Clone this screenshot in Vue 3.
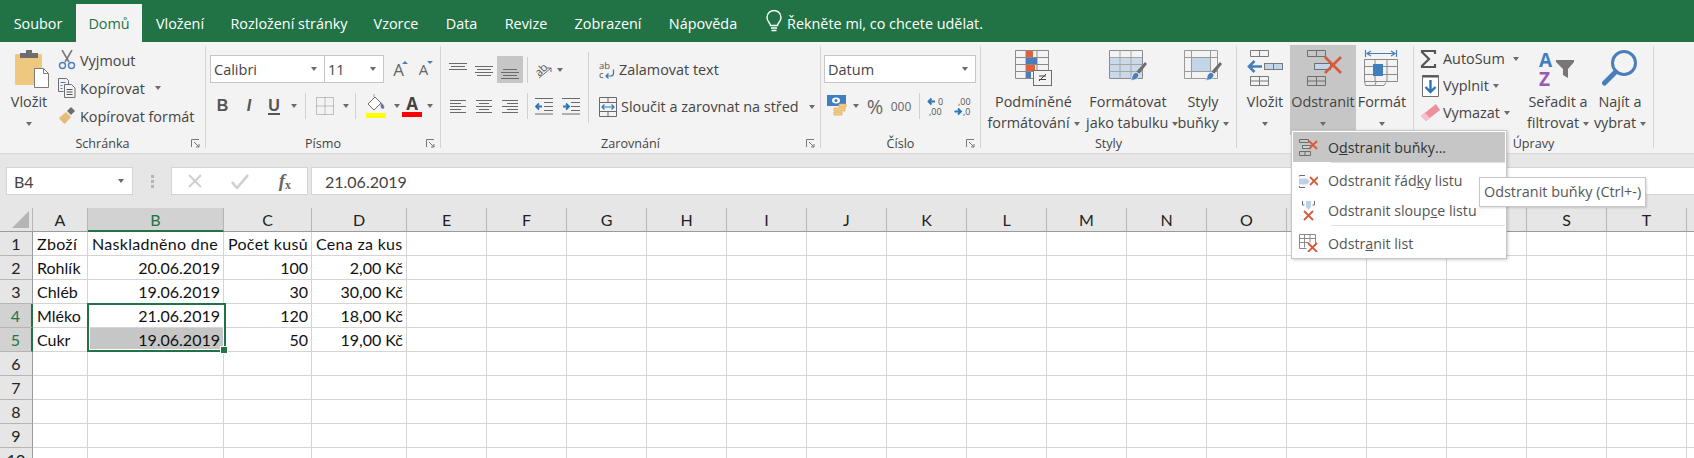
<template>
  <div class="app">
    <!-- tabs -->
    <div class="tabs">
      <span v-for="t in tabs" :key="t.name" class="tab" :class="{ active: t.name === 'Domů' }" :style="{ width: t.w + 'px' }">{{ t.name }}</span>
      <svg class="bulb" width="18" height="24" viewBox="0 0 18 24" fill="none" stroke="#fff" stroke-width="1.4">
        <path d="M5.5 15.5c0-2.5-3.5-4-3.5-8a7 7 0 0 1 14 0c0 4-3.500 5.500-3.500 8z" />
        <path d="M6 18h6M6.500 20.500h5" />
      </svg>
      <span class="tell">Řekněte mi, co chcete udělat.</span>
    </div>

    <!-- ribbon -->
    <div class="ribbon">
      <!-- Schránka -->
      <section class="group g-clip">
        <div class="body clip-body">
          <div class="big paste">
            <div class="big-icon">
              <svg class="paste-icon" width="34" height="38" viewBox="0 0 34 38">
                <rect x="0" y="4" width="27" height="31" rx="1" fill="#edc87e" />
                <path d="M5 8V3h6V0h6v3h6v5z" fill="#6d6d6d" />
                <path d="M19.500 18.500h9l5 5v14h-14z" fill="#fff" stroke="#7a7a7a" />
                <path d="M28.500 18.500v5h5" fill="none" stroke="#7a7a7a" />
              </svg>
            </div>
            <div class="big-text">Vložit</div>
            <div class="big-text"><i class="caret"></i></div>
          </div>
          <div class="small-col">
            <div class="small">
              <svg width="18" height="20" viewBox="0 0 18 20" fill="none">
                <path d="M4 0l7 12M14 0L7 12" stroke="#7a7a7a" stroke-width="1.600" />
                <circle cx="4.500" cy="15.500" r="3" stroke="#4a7ebb" stroke-width="1.400" />
                <circle cx="13.500" cy="15.500" r="3" stroke="#4a7ebb" stroke-width="1.400" />
              </svg>
              <span>Vyjmout</span>
            </div>
            <div class="small">
              <svg width="18" height="20" viewBox="0 0 18 20" fill="none" stroke="#6e6e6e">
                <path d="M.5.5h8l2 2v4M.5.5v13h5" />
                <path d="M6.500 6.500h7l3.500 3.500v9.500H6.500z" fill="#f3f3f3" />
                <path d="M2.500 4.500h5M2.500 7.500h2M2.500 10.500h2" stroke="#4a7ebb" />
                <path d="M8.500 11.500h6M8.500 14h6M8.500 16.500h6" stroke="#555" />
              </svg>
              <span>Kopírovat</span><i class="caret after-copy"></i>
            </div>
            <div class="small">
              <svg width="18" height="20" viewBox="0 0 18 20">
                <path d="M1 12l7-6 5 5-6 7c-2-1-3-2-3-3-1 0-2-1-3-3z" fill="#e4bd7c" />
                <path d="M9 5l4-4 4 4-4 4z" fill="#6e6e6e" />
              </svg>
              <span>Kopírovat formát</span>
            </div>
          </div>
        </div>
        <div class="label">Schránka<svg class="launch" viewBox="0 0 9 9" width="9" height="9" fill="none" stroke="#777"><path d="M.5 8V.5H8" /><path d="M3 3l5 5M5 8h3V5" /></svg></div>
      </section>

      <!-- Písmo -->
      <section class="group g-font">
        <div class="body stack">
          <div class="row font-row1">
            <div class="combo font-name"><span>Calibri</span><i class="caret"></i></div>
            <div class="combo font-size"><span>11</span><i class="caret"></i></div>
            <div class="cell-btn letter-a">A<svg class="mini-tri" width="6" height="3" viewBox="0 0 6 3"><path d="M0 3l3-3 3 3z" fill="#4a7ebb" /></svg></div>
            <div class="cell-btn letter-a small-a">A<svg class="mini-tri" width="6" height="3" viewBox="0 0 6 3"><path d="M0 0l3 3 3-3z" fill="#4a7ebb" /></svg></div>
          </div>
          <div class="row font-row2">
            <div class="cell-btn fmt"><b>B</b></div>
            <div class="cell-btn fmt"><b><i>I</i></b></div>
            <div class="cell-btn fmt"><b class="under">U</b></div>
            <div class="cell-btn"><i class="caret"></i></div>
            <div class="cell-btn"><i class="vsep short"></i></div>
            <div class="cell-btn">
              <svg width="18" height="18" viewBox="0 0 18 18" fill="none" stroke="#8a8a8a" stroke-dasharray="1 1">
                <path d="M.5.5h17v17H.5zM9 .5v17M.5 9h17" />
              </svg>
            </div>
            <div class="cell-btn"><i class="caret"></i></div>
            <div class="cell-btn"><i class="vsep short"></i></div>
            <div class="cell-btn">
              <svg width="20" height="24" viewBox="0 0 20 24">
                <path d="M2 10l7-7 6 6-7 7z" fill="#fff" stroke="#6e6e6e" />
                <path d="M8 3V0M15 9c2 1 3 3 3 5a2 2 0 0 1-3-1z" fill="#4a7ebb" stroke="#6e6e6e" stroke-width=".6" />
                <rect y="19" width="20" height="5" fill="#ffff00" />
              </svg>
            </div>
            <div class="cell-btn"><i class="caret"></i></div>
            <div class="cell-btn color-a"><b>A</b><i class="color-bar"></i></div>
            <div class="cell-btn"><i class="caret"></i></div>
          </div>
        </div>
        <div class="label">Písmo<svg class="launch" viewBox="0 0 9 9" width="9" height="9" fill="none" stroke="#777"><path d="M.5 8V.5H8" /><path d="M3 3l5 5M5 8h3V5" /></svg></div>
      </section>

      <!-- Zarovnání -->
      <section class="group g-align">
        <div class="body align-body">
          <div class="align-grid">
            <div v-for="(ic, i) in vAlign" :key="i" class="cell-btn" :class="{ pressed: i === 2 }">
              <svg width="18" height="18" viewBox="0 0 18 18" stroke="#6a6a6a"><path :d="ic" /></svg>
            </div>
            <div class="cell-btn"><i class="vsep short"></i></div>
            <div class="cell-btn">
              <svg width="20" height="20" viewBox="0 0 20 20">
                <text x="1" y="13" transform="rotate(-45 8 10)" font-size="11" font-family="Open Sans, sans-serif" fill="#555">ab</text>
                <path d="M5 18L17 8M13 8h4v4" fill="none" stroke="#6e6e6e" />
              </svg>
            </div>
            <div class="cell-btn start"><i class="caret"></i></div>
            <div v-for="(ic, i) in hAlign" :key="'h' + i" class="cell-btn">
              <svg width="18" height="18" viewBox="0 0 18 18" stroke="#6a6a6a"><path :d="ic" /></svg>
            </div>
            <div class="cell-btn"><i class="vsep short"></i></div>
            <div class="cell-btn">
              <svg width="18" height="18" viewBox="0 0 18 18" fill="none">
                <path d="M0 1.500h18M9 5.500h9M9 9.500h9M9 13.500h9M0 17h18" stroke="#6a6a6a" />
                <path d="M7 9.500H1M4 6.500l-3 3 3 3" stroke="#2e75b6" stroke-width="1.800" />
              </svg>
            </div>
            <div class="cell-btn">
              <svg width="18" height="18" viewBox="0 0 18 18" fill="none">
                <path d="M0 1.500h18M9 5.500h9M9 9.500h9M9 13.500h9M0 17h18" stroke="#6a6a6a" />
                <path d="M1 9.500h6M4 6.500l3 3-3 3" stroke="#2e75b6" stroke-width="1.800" />
              </svg>
            </div>
          </div>
          <i class="vsep tall"></i>
          <div class="wrap-col">
            <div class="small">
              <svg width="16" height="18" viewBox="0 0 16 18">
                <text x="0" y="8" font-size="9.500" font-family="Open Sans, sans-serif" fill="#555">ab</text>
                <text x="0" y="17" font-size="9.500" font-family="Open Sans, sans-serif" fill="#555">c</text>
                <path d="M14.500 8.500v4c0 2-1 2.500-3 2.500H7M9.500 12.500L7 15l2.500 2.500" fill="none" stroke="#2e75b6" stroke-width="1.200" />
              </svg>
              <span>Zalamovat text</span>
            </div>
            <div class="small">
              <svg width="18" height="20" viewBox="0 0 18 20" fill="none">
                <path d="M.5.5h17v19H.5zM.5 5.500h17M.5 14.500h17M9 .5v5M9 14.500v5" stroke="#6a6a6a" />
                <path d="M3 10h12M5.500 7.500L3 10l2.500 2.500M12.500 7.500L15 10l-2.500 2.500" stroke="#2e75b6" stroke-width="1.200" />
              </svg>
              <span>Sloučit a zarovnat na střed</span><i class="caret after-merge"></i>
            </div>
          </div>
        </div>
        <div class="label">Zarovnání<svg class="launch" viewBox="0 0 9 9" width="9" height="9" fill="none" stroke="#777"><path d="M.5 8V.5H8" /><path d="M3 3l5 5M5 8h3V5" /></svg></div>
      </section>

      <!-- Číslo -->
      <section class="group g-num">
        <div class="body stack">
          <div class="row"><div class="combo num-combo"><span>Datum</span><i class="caret"></i></div></div>
          <div class="row num-row2">
            <div class="cell-btn">
              <svg width="20" height="22" viewBox="0 0 20 22">
                <rect x="0" y="0" width="19" height="11" fill="#3f7fbf" />
                <ellipse cx="9" cy="5.500" rx="4" ry="3" fill="#fff" />
                <circle cx="9" cy="5.500" r="1.500" fill="#3f7fbf" />
                <path d="M7 13h11v3H7zM7 17h8v3H7zM12 9h7v3h-7z" fill="#f3d08f" stroke="#dba64f" stroke-width=".7" />
              </svg>
            </div>
            <div class="cell-btn"><i class="caret"></i></div>
            <div class="cell-btn pct">%</div>
            <div class="cell-btn zeros">000</div>
            <div class="cell-btn"><i class="vsep short"></i></div>
            <div class="cell-btn dec">
              <svg width="20" height="20" viewBox="0 0 20 20">
                <path d="M8 5.500H1.500M4.500 2.500L1.500 5.500l3 3" fill="none" stroke="#2e75b6" stroke-width="1.800" />
                <text x="11" y="9" font-size="9" font-family="Open Sans, sans-serif" fill="#555">0</text>
                <text x="2" y="19" font-size="9" font-family="Open Sans, sans-serif" fill="#555">,00</text>
              </svg>
            </div>
            <div class="cell-btn dec">
              <svg width="20" height="20" viewBox="0 0 20 20">
                <text x="5" y="9" font-size="9" font-family="Open Sans, sans-serif" fill="#555">,00</text>
                <path d="M1.500 15.500H8M5 12.500l3 3-3 3" fill="none" stroke="#2e75b6" stroke-width="1.800" />
                <text x="10" y="19" font-size="9" font-family="Open Sans, sans-serif" fill="#555">,0</text>
              </svg>
            </div>
          </div>
        </div>
        <div class="label">Číslo<svg class="launch" viewBox="0 0 9 9" width="9" height="9" fill="none" stroke="#777"><path d="M.5 8V.5H8" /><path d="M3 3l5 5M5 8h3V5" /></svg></div>
      </section>

      <!-- Styly -->
      <section class="group g-styles">
        <div class="body flexrow">
          <div class="big w105">
            <div class="big-icon">
              <svg width="38" height="36" viewBox="0 0 38 36" fill="none">
                <path d="M.5.5h33v28H.5zM.5 7.500h33M.5 14.500h33M.5 21.500h33M11 .5v28M22 .5v28" stroke="#8a8a8a" />
                <rect x="11" y="1" width="7" height="6" fill="#e0623c" />
                <rect x="11" y="8" width="11" height="6" fill="#4a7ebb" />
                <rect x="11" y="15" width="9" height="6" fill="#e0623c" />
                <rect x="11" y="22" width="5" height="6" fill="#4a7ebb" />
                <rect x="18.500" y="20.500" width="18" height="15" fill="#f3f3f3" stroke="#6e6e6e" />
                <path d="M24 31l7-7M24 26h7M24 29.500h7" stroke="#444" />
              </svg>
            </div>
            <div class="big-text">Podmíněné</div>
            <div class="big-text">formátování<i class="caret inline"></i></div>
          </div>
          <div class="big w84">
            <div class="big-icon">
              <svg width="38" height="36" viewBox="0 0 38 36" fill="none">
                <path d="M.5.5h33v28H.5z" stroke="#8a8a8a" />
                <rect x="1" y="7" width="32" height="21" fill="#c9d9ea" />
                <path d="M.5 7.500h33M.5 14.500h33M.5 21.500h33M11 .5v28M22 .5v28" stroke="#a5a5a5" />
                <path d="M36 12l2 2-8 10-3-2z" fill="#6e6e6e" />
                <path d="M27 22l3 2c0 4-3 7-9 6 2-1 2-2 2-4 1-2 2-3 4-4z" fill="#4a7ebb" stroke="#f3f3f3" />
              </svg>
            </div>
            <div class="big-text">Formátovat</div>
            <div class="big-text">jako tabulku<i class="caret inline"></i></div>
          </div>
          <div class="big w67">
            <div class="big-icon">
              <svg width="38" height="36" viewBox="0 0 38 36" fill="none">
                <path d="M.5.5h33v28H.5zM.5 7.500h33M.5 21.500h33M7.500 .5v28M26.500 .5v28" stroke="#9a9a9a" />
                <rect x="8" y="8" width="18" height="13" fill="#c3d5e8" />
                <path d="M36 12l2 2-8 10-3-2z" fill="#6e6e6e" />
                <path d="M27 22l3 2c0 4-3 7-9 6 2-1 2-2 2-4 1-2 2-3 4-4z" fill="#4a7ebb" stroke="#f3f3f3" />
              </svg>
            </div>
            <div class="big-text">Styly</div>
            <div class="big-text">buňky<i class="caret inline"></i></div>
          </div>
        </div>
        <div class="label">Styly</div>
      </section>

      <!-- Buňky -->
      <section class="group g-cells">
        <div class="body flexrow cells-body">
          <div class="big w50">
            <div class="big-icon">
              <svg width="36" height="36" viewBox="0 0 36 36" fill="none">
                <path d="M3.500.5h18v6h-18zM12.500.5v6M3.500 26.500h18v9h-18zM3.500 31h18M12.500 26.500v9" stroke="#7a7a7a" />
                <rect x="17.500" y="13.500" width="18" height="6" fill="#c3d5e8" stroke="#7a7a7a" />
                <path d="M26.500 13.500v6" stroke="#7a7a7a" />
                <path d="M15 16.500H2M7.500 11L2 16.500 7.500 22" stroke="#4a7ebb" stroke-width="2.600" />
              </svg>
            </div>
            <div class="big-text">Vložit</div>
            <div class="big-text"><i class="caret"></i></div>
          </div>
          <div class="big w66 hot">
            <div class="big-icon">
              <svg class="del-icon" width="36" height="36" viewBox="0 0 36 36" fill="none">
                <path d="M.5.5h18v6H.5zM9.500.5v6M.5 26.500h18v9H.5zM.5 31h18M9.500 26.500v9" stroke="#6e6e6e" />
                <rect x="7.500" y="13.500" width="16" height="6" fill="#c3d5e8" stroke="#6e6e6e" />
                <path d="M18 7l16 16M34 7L18 23" stroke="#d9593a" stroke-width="2.600" />
              </svg>
            </div>
            <div class="big-text">Odstranit</div>
            <div class="big-text"><i class="caret"></i></div>
          </div>
          <div class="big w52">
            <div class="big-icon">
              <svg width="36" height="38" viewBox="0 0 36 38" fill="none">
                <path d="M1.500 0v7M32.500 0v7M3 3.500h28M7 1L3 3.500 7 6M27 1l4 2.500L27 6" stroke="#4a7ebb" stroke-width="1.200" />
                <path d="M.5 9.500h33v22H.5zM.5 16.500h33M.5 24.500h33M11 9.500v22M23 9.500v22" stroke="#8a8a8a" />
                <rect x="9" y="14" width="10" height="12" fill="#3f7fbf" />
                <path d="M.5 31.500l1 4h9l2-4M11 35.500h9l2-3" stroke="#8a8a8a" />
              </svg>
            </div>
            <div class="big-text">Formát</div>
            <div class="big-text"><i class="caret"></i></div>
          </div>
        </div>
        <div class="label">Buňky</div>
      </section>

      <!-- Úpravy -->
      <section class="group g-edit">
        <div class="body flexrow">
          <div class="small-col edit-col">
            <div class="small">
              <svg width="21" height="18" viewBox="0 0 21 18"><path d="M15 4V1H2v1l7 7-7 7v1h13v-3" fill="none" stroke="#555" stroke-width="2.200" /></svg>
              <span>AutoSum</span><i class="caret after-sum"></i>
            </div>
            <div class="small">
              <svg width="21" height="22" viewBox="0 0 21 22" fill="none">
                <path d="M2.500.5h16v21h-16z" stroke="#6e6e6e" fill="#fff" />
                <path d="M2.500 1.500h16" stroke="#555" stroke-width="2" />
                <path d="M10.500 5v12M5.500 12l5 5 5-5" stroke="#2e75b6" stroke-width="2.400" />
              </svg>
              <span>Vyplnit</span><i class="caret inline"></i>
            </div>
            <div class="small">
              <svg width="21" height="18" viewBox="0 0 21 18"><path d="M1 12l5 5 14-11-4-6z" fill="#ee8f9f" /><path d="M1 12l5 5 4-3-5-5z" fill="#f6c2cb" /></svg>
              <span>Vymazat</span><i class="caret inline"></i>
            </div>
          </div>
          <div class="big w66">
            <div class="big-icon">
              <svg width="38" height="38" viewBox="0 0 38 38">
                <text x="0" y="17" font-size="19" font-weight="700" font-family="Open Sans, sans-serif" fill="#3f7fbf">A</text>
                <text x="0" y="36" font-size="19" font-weight="700" font-family="Open Sans, sans-serif" fill="#9b59b6">Z</text>
                <path d="M17 10h18v2l-6 7v9l-5-3v-6l-7-7z" fill="#777" />
              </svg>
            </div>
            <div class="big-text">Seřadit a</div>
            <div class="big-text">filtrovat<i class="caret inline"></i></div>
          </div>
          <div class="big w58">
            <div class="big-icon">
              <svg width="36" height="38" viewBox="0 0 36 38" fill="none">
                <circle cx="22" cy="13" r="11.500" stroke="#4a7ebb" stroke-width="3" />
                <path d="M13.500 22L2.500 33" stroke="#4a7ebb" stroke-width="5" stroke-linecap="round" />
              </svg>
            </div>
            <div class="big-text">Najít a</div>
            <div class="big-text">vybrat<i class="caret inline"></i></div>
          </div>
        </div>
        <div class="label">Úpravy</div>
      </section>
    </div>

    <!-- formula bar -->
    <div class="formula">
      <div class="namebox"><span>B4</span><i class="caret"></i></div>
      <div class="grip"><i></i><i></i><i></i></div>
      <div class="fx-box">
        <svg width="14" height="14" viewBox="0 0 14 14"><path d="M1 1l12 12M13 1L1 13" stroke="#cfcfcf" stroke-width="2" /></svg>
        <svg width="18" height="15" viewBox="0 0 18 15" fill="none"><path d="M1 8l5 6L17 1" stroke="#cfcfcf" stroke-width="2.600" /></svg>
        <span class="fx"><i>f</i><sub>x</sub></span>
      </div>
      <div class="fbar">21.06.2019</div>
    </div>

    <!-- sheet -->
    <div class="sheet">
      <div class="corner"><svg width="17" height="17" viewBox="0 0 17 17"><path d="M17 0v17H0z" fill="#b5b5b5" /></svg></div>
      <div v-for="c in cols" :key="c" class="colhead" :class="{ sel: c === 'B' }">{{ c }}</div>
      <template v-for="r in rowNums" :key="r">
        <div class="rowhead" :class="{ sel: r === 4 || r === 5 }">{{ r }}</div>
        <div v-for="c in cols" :key="c + r" class="cell" :class="cellClass(c, r)">{{ cellText(c, r) }}</div>
      </template>
      <!-- selection frame -->
      <div class="selection"><i class="handle"></i></div>
    </div>

    <!-- dropdown over ribbon -->
    <div class="menu">
      <div class="menu-item hovered">
        <svg class="mi" width="19" height="17" viewBox="0 0 19 17" fill="none">
          <path d="M.5.5h9v3h-9zM.5 12.500h11v4H.5zM6 12.500v4" stroke="#6e6e6e" /><rect x="3.500" y="6.500" width="8" height="3" fill="#c3d5e8" stroke="#6e6e6e" />
          <path d="M10 2l8 8M18 2l-8 8" stroke="#d9593a" stroke-width="1.800" />
        </svg>
        <span>O<u>d</u>stranit buňky...</span>
      </div>
      <div class="menu-sep"></div>
      <div class="menu-item">
        <svg class="mi" width="19" height="17" viewBox="0 0 19 17" fill="none">
          <path d="M6 3.500H.5v1M.5 14v1.500H6" stroke="#6e6e6e" /><path d="M0 6.500h8l3 3-3 3H0z" fill="#bcd2e8" />
          <path d="M11 5l8 8M19 5l-8 8" stroke="#d9593a" stroke-width="1.800" />
        </svg>
        <span>Odstranit řád<u>k</u>y listu</span>
      </div>
      <div class="menu-item">
        <svg class="mi tall-mi" width="19" height="20" viewBox="0 0 19 20" fill="none">
          <path d="M3.500 0v4h2M15.500 0v4h-2" stroke="#6e6e6e" /><path d="M7 0h5v6l-2.500 3L7 6z" fill="#bcd2e8" />
          <path d="M5 10l9 9M14 10l-9 9" stroke="#d9593a" stroke-width="1.800" />
        </svg>
        <span>Odstranit sloup<u>c</u>e listu</span>
      </div>
      <div class="menu-sep"></div>
      <div class="menu-item">
        <svg class="mi" width="19" height="18" viewBox="0 0 19 18" fill="none">
          <path d="M.5.5h16v11M.5.5v14h7M.5 4.500h16M.5 8.500h9M5.500 .5v13M11 .5v8" stroke="#8a8a8a" />
          <path d="M9 9l9 9M18 9l-9 9" stroke="#d9593a" stroke-width="1.800" />
        </svg>
        <span>Odstr<u>a</u>nit list</span>
      </div>
    </div>
    <div class="tip">Odstranit buňky (Ctrl+-)</div>
  </div>
</template>

<script setup>
const tabs = [
  { name: 'Soubor', w: 76 },
  { name: 'Domů', w: 66 },
  { name: 'Vložení', w: 76 },
  { name: 'Rozložení stránky', w: 142 },
  { name: 'Vzorce', w: 72 },
  { name: 'Data', w: 59 },
  { name: 'Revize', w: 70 },
  { name: 'Zobrazení', w: 94 },
  { name: 'Nápověda', w: 96 }
]

const lines = (rows) => rows.map(([a, b, y]) => `M${a} ${y}.5H${b}`).join('')
const vAlign = [
  lines([[0, 18, 2], [2, 16, 5], [0, 18, 8]]),
  lines([[0, 18, 5], [2, 16, 8], [0, 18, 11], [2, 16, 14]]),
  lines([[2, 16, 8], [0, 18, 11], [2, 16, 14], [0, 18, 17]])
]
const hAlign = [
  lines([[1, 17, 3], [1, 12, 6], [1, 17, 9], [1, 12, 12], [1, 17, 15]]),
  lines([[1, 17, 3], [4, 14, 6], [1, 17, 9], [4, 14, 12], [1, 17, 15]]),
  lines([[1, 17, 3], [6, 17, 6], [1, 17, 9], [6, 17, 12], [1, 17, 15]])
]

const cols = 'ABCDEFGHIJKLMNOPQRSTU'.split('')
const rowNums = [1, 2, 3, 4, 5, 6, 7, 8, 9, 10]

const data = {
  A1: 'Zboží', B1: 'Naskladněno dne', C1: 'Počet kusů', D1: 'Cena za kus',
  A2: 'Rohlík', B2: '20.06.2019', C2: '100', D2: '2,00 Kč',
  A3: 'Chléb', B3: '19.06.2019', C3: '30', D3: '30,00 Kč',
  A4: 'Mléko', B4: '21.06.2019', C4: '120', D4: '18,00 Kč',
  A5: 'Cukr', B5: '19.06.2019', C5: '50', D5: '19,00 Kč'
}

const cellText = (c, r) => data[c + r] || ''
const cellClass = (c, r) => ({
  num: r > 1 && c !== 'A',
  head: r === 1,
  grey: c === 'B' && r === 5
})
</script>

<style>
html, body { margin: 0; background: #fff; overflow: hidden; }
</style>

<style scoped>
.app {
  position: relative;
  width: 1694px;
  height: 458px;
  overflow: hidden;
  font-family: "Open Sans", "Noto Sans", sans-serif;
  font-size: 14.4px;
  color: #444;
}

/* tabs */
.tabs {
  display: flex;
  align-items: flex-end;
  height: 42px;
  background: #217346;
  color: #fff;
}
.tab {
  height: 38px;
  line-height: 39px;
  text-align: center;
  flex: none;
}
.tab.active {
  background: #f3f3f3;
  color: #217346;
}
.bulb { flex: none; margin: 0 4px 8px 14px; }
.tell { line-height: 39px; height: 38px; }

/* ribbon */
.ribbon {
  display: flex;
  height: 112px;
  padding-top: 4px;
  box-sizing: border-box;
  background: #f3f3f3;
  border-bottom: 1px solid #d8d8d8;
}
.group {
  flex: none;
  height: 102px;
  display: flex;
  flex-direction: column;
  border-right: 1px solid #d4d4d4;
  box-sizing: border-box;
}
.g-clip { width: 206px; }
.g-font { width: 235px; }
.g-align { width: 380px; }
.g-num { width: 160px; }
.g-styles { width: 256px; }
.g-cells { width: 177px; }
.g-edit { width: 240px; }
.body { height: 89px; flex: none; }
.label {
  position: relative;
  height: 13px;
  line-height: 17px;
  font-size: 12.6px;
  text-align: center;
}
.launch { position: absolute; right: 5px; top: 4px; }
.flexrow, .clip-body { display: flex; }

.caret {
  display: inline-block;
  flex: none;
  width: 0;
  height: 0;
  border-left: 3.5px solid transparent;
  border-right: 3.5px solid transparent;
  border-top: 4px solid #6a6a6a;
  vertical-align: middle;
}
.caret.inline { margin-left: 4px; }

/* big buttons */
.big { flex: none; text-align: center; white-space: nowrap; }
.big-icon { height: 45px; padding-top: 4px; box-sizing: border-box; display: flex; justify-content: center; }
.big-text { line-height: 21px; height: 21px; }
.paste { width: 50px; margin-left: 4px; }
.paste-icon { margin-left: 6px; flex: none; }
.del-icon { margin-left: 4px; flex: none; }
.w105 { width: 105px; }
.w84 { width: 84px; }
.w67 { width: 66px; }
.w50 { width: 50px; margin-left: 3px; }
.w66 { width: 66px; }
.w52 { width: 52px; }
.w58 { width: 58px; }
.hot { background: #c6c6c6; margin-top: -1px; height: 90px; padding-top: 1px; box-sizing: border-box; }

/* small buttons */
.small-col { padding-left: 4px; }
.small {
  display: flex;
  align-items: center;
  gap: 4px;
  height: 28px;
  white-space: nowrap;
}
.small svg { flex: none; }
.after-copy { margin-left: 6px; }
.after-merge { margin-left: 6px; }
.after-sum { margin-left: 6px; }
.edit-col { width: 111px; box-sizing: border-box; padding-left: 6px; margin-top: -1px; }
.edit-col .small { height: 27px; gap: 2px; }
.edit-col .caret.inline { margin-left: 2px; }

.stack { display: flex; flex-direction: column; gap: 9px; padding-top: 9px; box-sizing: border-box; }
.row { display: flex; height: 28px; }
.cell-btn { display: flex; align-items: center; justify-content: center; min-width: 0; height: 28px; }
.cell-btn.start { justify-content: flex-start; }
.vsep { display: block; width: 1px; background: #d0d0d0; flex: none; }
.vsep.short { height: 26px; }

/* font group */
.g-font .stack { padding-left: 4px; }
.combo {
  display: flex;
  align-items: center;
  justify-content: space-between;
  box-sizing: border-box;
  height: 28px;
  padding: 0 7px 0 3px;
  background: #fff;
  border: 1px solid #c6c6c6;
  font-size: 14.500px;
}
.font-name { width: 115px; }
.font-size { width: 60px; margin-left: -1px; }
.letter-a { position: relative; width: 25px; font-size: 17px; margin-left: 0; color: #666; }
.small-a { font-size: 15px; }
.font-row1 .letter-a:nth-of-type(3) { margin-left: 2px; }
.mini-tri { position: absolute; left: 16px; top: 6px; }
.font-row2 {
  display: grid;
  grid-template-columns: 25px 28px 22px 17px 7px 32px 9px 10px 32px 10px 20px 15px;
}
.fmt { font-size: 16px; color: #555; font-family: "Liberation Sans", sans-serif; }
.under { border-bottom: 2px solid #555; line-height: 15px; }
.color-a { position: relative; flex-direction: column; color: #444; font-size: 17px; line-height: 17px; }
.color-bar { display: block; width: 20px; height: 5px; background: #ff0000; }

/* alignment group */
.align-body { display: flex; padding-top: 10px; box-sizing: border-box; }
.align-grid {
  display: grid;
  grid-template-columns: 26px 26px 26px 8px 26px 27px;
  grid-template-rows: 27px 28px;
  row-gap: 9px;
  padding-left: 4px;
  width: 143px;
  flex: none;
  align-content: start;
}
.align-grid .cell-btn { height: auto; }
.pressed { background: #c6c6c6; }
.vsep.tall { height: 71px; margin-top: -4px; }
.wrap-col { padding: 0 0 0 10px; margin-top: -5px; }
.wrap-col .small { height: 37px; }

/* number group */
.g-num .stack { padding-left: 3px; }
.num-combo { width: 152px; }
.num-row2 { display: grid; grid-template-columns: 26px 12px 26px 26px 10px 26px 26px; }
.pct { font-size: 20px; color: #666; }
.zeros { font-size: 12px; color: #666; }

/* formula bar */
.formula {
  display: flex;
  align-items: flex-start;
  height: 54px;
  padding-top: 13px;
  box-sizing: border-box;
  background: #e6e6e6;
  font-family: Lato, sans-serif;
  font-size: 16px;
}
.namebox, .fx-box, .fbar {
  display: flex;
  align-items: center;
  box-sizing: border-box;
  height: 28px;
  background: #fff;
  border: 1px solid #d4d4d4;
  flex: none;
}
.namebox { width: 127px; margin-left: 6px; padding: 0 8px 0 7px; justify-content: space-between; }
.grip { width: 38px; flex: none; display: flex; flex-direction: column; align-items: center; gap: 2px; padding-top: 8px; }
.grip i { width: 3px; height: 3px; background: #b5b5b5; }
.fx-box { width: 137px; padding: 0 16px; justify-content: space-between; margin-right: 3px; }
.fx { font-family: "Liberation Serif", serif; font-weight: 700; color: #666; font-size: 19px; }
.fx sub { font-size: 12px; vertical-align: -2px; line-height: 0; }
.fbar { width: 1384px; padding-left: 13px; color: #444; }

/* sheet */
.sheet {
  position: relative;
  display: grid;
  grid-template-columns: 33px 55px 136px 88px 95px repeat(16, 80px) 80px;
  grid-auto-rows: 24px;
  font-family: Lato, sans-serif;
  font-size: 16px;
  color: #111;
  background: #fff;
}
.corner, .colhead, .rowhead {
  background: #e6e6e6;
  box-sizing: border-box;
  display: flex;
  align-items: center;
  justify-content: center;
  color: #222;
}
.corner { border-right: 1px solid #b5b5b5; border-bottom: 1px solid #9b9b9b; align-items: flex-end; justify-content: flex-end; padding: 0 3px 3px 0; }
.colhead { border-right: 1px solid #b5b5b5; border-bottom: 1px solid #9b9b9b; }
.colhead.sel { background: #d2d2d2; color: #217346; border-bottom: 2px solid #217346; }
.rowhead { border-right: 1px solid #9b9b9b; border-bottom: 1px solid #b5b5b5; }
.rowhead.sel { background: #d2d2d2; color: #217346; border-right: 2px solid #217346; }
.cell {
  box-sizing: border-box;
  border-right: 1px solid #d4d4d4;
  border-bottom: 1px solid #d4d4d4;
  padding: 0 3px 0 4px;
  line-height: 24px;
  white-space: nowrap;
  overflow: hidden;
}
.cell.head { letter-spacing: .3px; }
.cell.num { text-align: right; }
.cell.grey { background: #c6c6c6; }

.selection {
  position: absolute;
  left: 87px;
  top: 95px;
  width: 139px;
  height: 49px;
  box-sizing: border-box;
  border: 2px solid #217346;
  box-shadow: inset 0 0 0 1px #fff;
  pointer-events: none;
}
.handle {
  position: absolute;
  right: -4px;
  bottom: -4px;
  width: 6px;
  height: 6px;
  background: #217346;
  border: 1px solid #fff;
}

/* dropdown */
.menu {
  position: absolute;
  left: 1291px;
  top: 130px;
  width: 216px;
  height: 129px;
  box-sizing: border-box;
  padding: 1px;
  background: #fff;
  border: 1px solid #c6c6c6;
  box-shadow: 1px 1px 3px rgba(0, 0, 0, .2);
  color: #555;
  font-size: 14.2px;
}
.menu-item {
  display: flex;
  align-items: center;
  height: 30px;
  padding-left: 6px;
  white-space: nowrap;
}
.menu-item.hovered { background: #c6c6c6; color: #333; }
.mi { width: 19px; flex: none; margin-right: 10px; }
.tall-mi { margin-top: 2px; }
.menu-sep { height: 1px; margin: 0 0 2px 38px; background: #e0e0e0; }
.tip {
  position: absolute;
  left: 1479px;
  top: 177px;
  width: 167px;
  height: 30px;
  box-sizing: border-box;
  padding-left: 4px;
  line-height: 27px;
  white-space: nowrap;
  background: #fff;
  border: 1px solid #c6c6c6;
  box-shadow: 1px 1px 2px rgba(0, 0, 0, .15);
  color: #575757;
}
</style>
